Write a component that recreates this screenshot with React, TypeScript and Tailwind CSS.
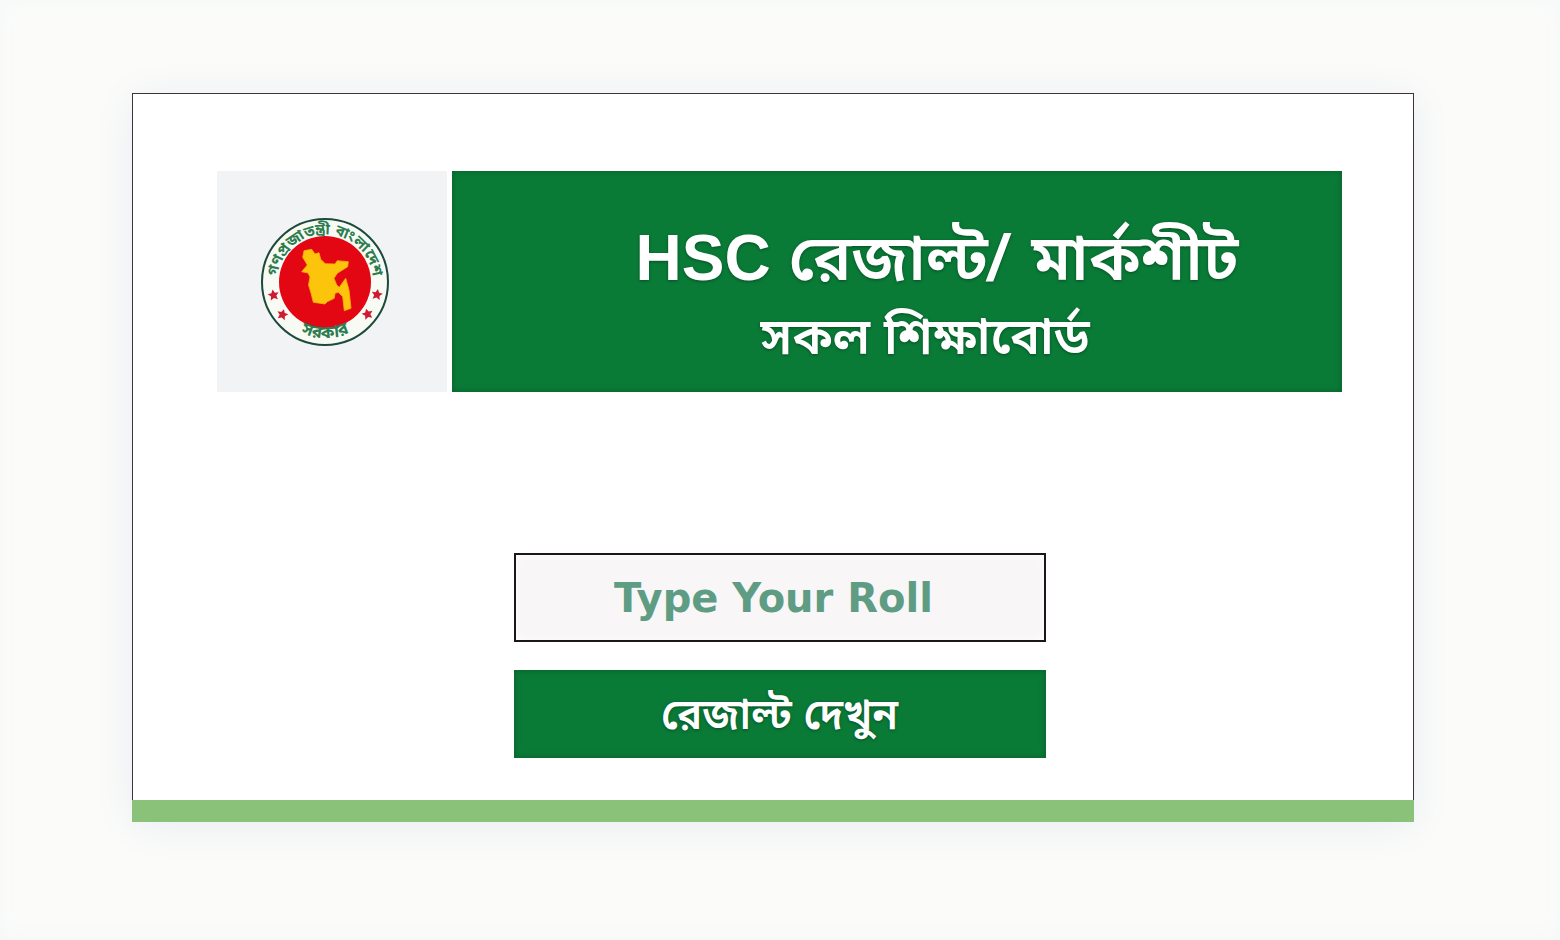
function Star({ x, y, r }: { x: number; y: number; r: number }) {
  return (
    <path
      transform={`translate(${x} ${y}) rotate(${r})`}
      d="M0-5.5 1.8-2 5.6-1.8 2.7 1 3.6 4.9 0 3-3.6 4.9-2.7 1-5.6-1.8-1.8-2Z"
      fill="#cf1b32"
    />
  );
}

function Emblem() {
  return (
    <svg viewBox="0 0 130 130" className="size-[130px]" role="img" aria-label="গণপ্রজাতন্ত্রী বাংলাদেশ সরকার">
      <defs>
        <path id="arc-top" d="M18 75A48 48 0 1 1 112 75" />
        <path id="arc-bottom" d="M9 65A56 56 0 0 0 121 65" />
      </defs>
      <circle cx="65" cy="65" r="63" fill="#f8fbf3" stroke="#1d4a3c" strokeWidth="2" />
      <circle cx="65" cy="65" r="46" fill="#e30613" />
      <g fill="#2c7c50" fontWeight="700" textAnchor="middle">
        <text fontSize="15">
          <textPath href="#arc-top" startOffset="50%">গণপ্রজাতন্ত্রী বাংলাদেশ</textPath>
        </text>
        <text fontSize="17">
          <textPath href="#arc-bottom" startOffset="50%">সরকার</textPath>
        </text>
      </g>
      <Star x={13.500} y={78} r={-10} />
      <Star x={22.500} y={97.500} r={15} />
      <Star x={117} y={77.500} r={10} />
      <Star x={107.500} y={97} r={-15} />
      <path
        d="M44 33.700 51.700 32.300 55 37 59 35.700 60.700 42.300 65.300 46.700 75 47 77.300 43.700 88.300 44.700 87.700 49.700 77.300 56.300 74 61.300 76.700 68 79.300 70.300 85.700 61.300 89 73 91 91.300 84.300 93.700 82.700 79.700 78.300 75.300 75 76.300 74.300 81.300 67.300 84.700 65 87 53.300 85.300 51 76 48.500 68 50 60 48 56 41.700 54.700 47.300 48 42.700 40.300Z"
        fill="#fcc50b"
        stroke="#f9b00b"
        strokeWidth=".8"
        strokeLinejoin="round"
      />
    </svg>
  );
}

export default function App() {
  return (
    <div className="min-h-screen bg-[#fbfcfa] pt-[93px] pr-[146px] pb-[118px] pl-[132px] font-['Liberation_Sans','Noto_Sans_Bengali',sans-serif] shadow-[inset_0_0_24px_#f5f7f8]">
      <main className="border border-b-0 border-[#3c343a] bg-white shadow-[0_4px_40px_#e9ebf0]">
        <div className="pt-[77px] pr-[71px] pb-[42px] pl-[84px]">
          <header className="flex gap-[5px]">
            <div className="flex w-[230px] shrink-0 items-center justify-center bg-[#f1f3f4] pr-[14px]">
              <Emblem />
            </div>
            <div className="flex h-[221px] flex-1 flex-col items-center justify-center bg-[#0a7a37] pt-7 pl-[80px] text-white shadow-[inset_0_0_6px_#06602a] text-shadow-[0_1px_3px_#064f24]">
              <h1 className="text-[64px] leading-[82px] font-semibold whitespace-nowrap">
                HSC রেজাল্ট<span className="mr-2 italic">/</span> মার্কশীট
              </h1>
              <p className="pr-6 text-[50px] leading-[76px] font-semibold whitespace-nowrap">সকল শিক্ষাবোর্ড</p>
            </div>
          </header>
          <form className="mx-auto mt-[161px] flex w-[532px] flex-col gap-7" onSubmit={(e) => e.preventDefault()}>
            <input
              type="text"
              aria-label="Type Your Roll"
              placeholder="Type Your Roll"
              className="h-[89px] border-2 border-[#1c161b] bg-[#f8f6f7] pr-3 text-center font-['DejaVu_Sans',sans-serif] text-[40px] font-bold text-[#276749] shadow-[inset_0_0_10px_#ffffff] outline-none placeholder:text-[#5f9c84]"
            />
            <button
              type="submit"
              className="h-[88px] bg-[#0a7a37] text-[42px] font-semibold text-white shadow-[inset_0_0_6px_#06602a] text-shadow-[0_1px_3px_#064f24]"
            >
              রেজাল্ট দেখুন
            </button>
          </form>
        </div>
        <div className="-mx-px h-[22px] bg-[#8ac279]" />
      </main>
    </div>
  );
}
